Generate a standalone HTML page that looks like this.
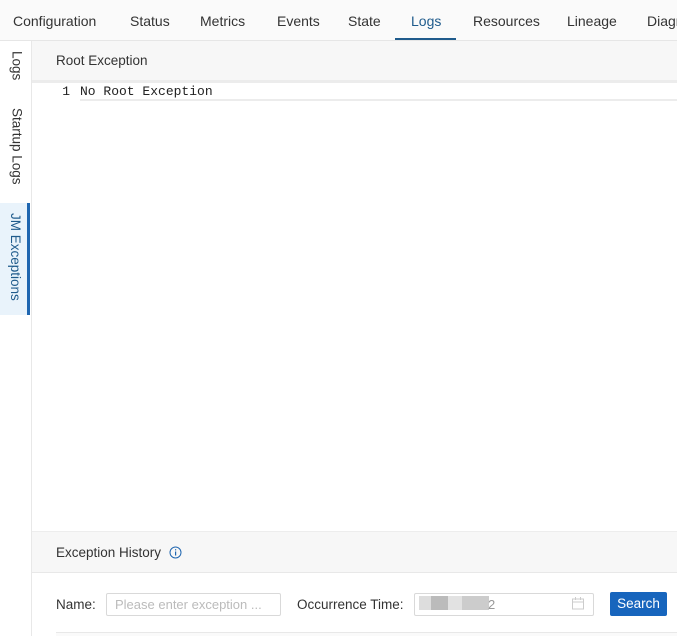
<!DOCTYPE html>
<html><head><style>
*{box-sizing:border-box;margin:0;padding:0}
body{width:677px;height:636px;overflow:hidden;background:#fff;font-family:"Liberation Sans",sans-serif;font-size:13px;color:#333;position:relative}
.tabs{position:absolute;left:0;top:0;width:677px;height:41px;background:#fafafa;border-bottom:1px solid #e6e6e6}
.tab{position:absolute;top:13px;font-size:14px;color:#333;white-space:nowrap}
.ul{position:absolute;left:395px;top:38px;width:61px;height:2px;background:#1f5b8c}
.side{position:absolute;left:0;top:41px;width:32px;height:595px;border-right:1px solid #e8e8e8;background:#fff}
.vt{position:absolute;left:0;width:30px;writing-mode:vertical-rl;font-size:13.5px;color:#333;display:flex;align-items:center;justify-content:flex-start;padding-top:0}
.hdr{position:absolute;left:32px;width:645px;background:#f7f7f7;border-bottom:1px solid #e8e8e8;font-size:13.5px;padding-left:24px}
</style></head><body>
<div class="tabs">
<span class="tab" style="left:13px">Configuration</span>
<span class="tab" style="left:130px">Status</span>
<span class="tab" style="left:200px">Metrics</span>
<span class="tab" style="left:277px">Events</span>
<span class="tab" style="left:348px">State</span>
<span class="tab" style="left:411px;color:#1f5b8c">Logs</span>
<span class="tab" style="left:473px">Resources</span>
<span class="tab" style="left:567px">Lineage</span>
<span class="tab" style="left:647px">Diagnosis</span>
<div class="ul"></div>
</div>
<div class="side">
<div class="vt" style="top:10px;height:34px;padding-left:4px">Logs</div>
<div class="vt" style="top:67px;height:82px;padding-left:4px">Startup Logs</div>
<div class="vt" style="top:162px;height:112px;padding-left:4px;background:#e9f3fb;color:#1f5b8c;border-right:3px solid #1f66b0;padding-top:10px">JM Exceptions</div>
</div>
<div class="hdr" style="top:41px;height:42px;line-height:40px;border-bottom:3px solid #ececec">Root Exception</div>
<div style="position:absolute;left:56px;top:84px;font-family:'Liberation Mono',monospace;font-size:13px;line-height:16px;color:#222"><span style="display:inline-block;width:14px;text-align:right;margin-right:10px">1</span>No Root Exception</div>
<div style="position:absolute;left:80px;top:99px;width:597px;height:2px;background:#ececec"></div>
<div class="hdr" style="top:531px;height:42px;line-height:42px;border-top:1px solid #ededed">Exception History <svg width="13" height="13" viewBox="0 0 13 13" style="vertical-align:-2px;margin-left:4px"><circle cx="6.5" cy="6.5" r="5.5" fill="none" stroke="#1f66b0"/><rect x="6" y="5.5" width="1.2" height="4" fill="#1f66b0"/><rect x="6" y="3.2" width="1.2" height="1.2" fill="#1f66b0"/></svg></div>
<div style="position:absolute;left:56px;top:597px;font-size:13.5px">Name:</div>
<div style="position:absolute;left:106px;top:593px;width:175px;height:23px;border:1px solid #d9d9d9;border-radius:2px;color:#bbb;font-size:13px;line-height:21px;padding-left:8px">Please enter exception ...</div>
<div style="position:absolute;left:297px;top:597px;font-size:13.5px">Occurrence Time:</div>
<div style="position:absolute;left:414px;top:593px;width:180px;height:23px;border:1px solid #d9d9d9;border-radius:2px"></div>
<div style="position:absolute;left:419px;top:596px;width:70px;height:14px;background:linear-gradient(90deg,#ddd 0 12px,#bbb 12px 29px,#e2e2e2 29px 43px,#ccc 43px 70px)"></div>
<span style="position:absolute;left:488px;top:597px;color:#999">2</span>
<svg style="position:absolute;left:572px;top:597px" width="12" height="13" viewBox="0 0 12 13"><rect x="0.5" y="2" width="11" height="10" fill="none" stroke="#ccc"/><line x1="0.5" y1="5" x2="11.5" y2="5" stroke="#ccc"/><line x1="3.5" y1="0" x2="3.5" y2="3" stroke="#ccc"/><line x1="8.5" y1="0" x2="8.5" y2="3" stroke="#ccc"/></svg>
<div style="position:absolute;left:610px;top:592px;width:57px;height:24px;background:#1765bd;border-radius:2px;color:#fff;font-size:13.5px;line-height:24px;text-align:center">Search</div>
<div style="position:absolute;left:56px;top:632px;width:621px;height:4px;border-top:1px solid #e8e8e8;background:#fafafa"></div>
</body></html>
